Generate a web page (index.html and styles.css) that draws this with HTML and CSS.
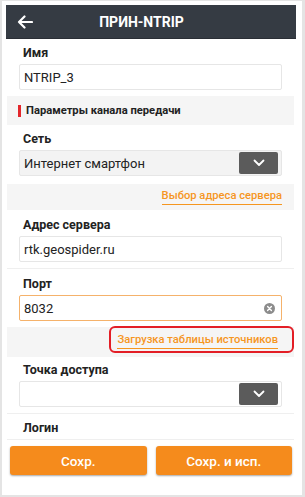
FILE: index.html
```html
<!DOCTYPE html>
<html lang="ru">
<head>
    <meta charset="UTF-8">
    <title>ПРИН-NTRIP</title>
    <meta name="viewport" content="width=device-width, initial-scale=1.0">
    <link rel="stylesheet" href="styles.css">
</head>
<body>
    <div class="frame">
        <div class="screen">
            <header class="topbar">
                <svg class="back" width="16" height="14" viewBox="0 0 16 14">
                    <path d="M15 7H2M7.5 1.5L2 7l5.5 5.5" fill="none" stroke="#fff" stroke-width="2.2" stroke-linecap="round" stroke-linejoin="round"/>
                </svg>
                <h1>ПРИН-NTRIP</h1>
            </header>

            <div class="field first">
                <label>Имя</label>
                <div class="input">NTRIP_3</div>
            </div>

            <div class="section">Параметры канала передачи</div>

            <div class="field tight">
                <label>Сеть</label>
                <div class="input select grey">
                    <span>Интернет смартфон</span>
                    <span class="drop">
                        <svg width="12" height="8" viewBox="0 0 12 8"><path d="M1.5 1.5L6 6l4.5-4.5" fill="none" stroke="#fff" stroke-width="1.8" stroke-linecap="round" stroke-linejoin="round"/></svg>
                    </span>
                </div>
            </div>

            <div class="band">
                <a class="link">Выбор адреса сервера</a>
            </div>

            <div class="field">
                <label>Адрес сервера</label>
                <div class="input">rtk.geospider.ru</div>
            </div>

            <div class="field sep">
                <label>Порт</label>
                <div class="input active">
                    <span>8032</span>
                    <span class="clear">
                        <svg width="11" height="11" viewBox="0 0 11 11"><circle cx="5.5" cy="5.5" r="5.5" fill="#8c8c8c"/><path d="M3.6 3.6l3.8 3.8M7.4 3.6L3.6 7.4" stroke="#fff" stroke-width="1.4" stroke-linecap="round"/></svg>
                    </span>
                </div>
            </div>

            <div class="band tall">
                <span class="mark"><a class="link">Загрузка таблицы источников</a></span>
            </div>

            <div class="field tighter">
                <label>Точка доступа</label>
                <div class="input select">
                    <span></span>
                    <span class="drop">
                        <svg width="12" height="8" viewBox="0 0 12 8"><path d="M1.5 1.5L6 6l4.5-4.5" fill="none" stroke="#fff" stroke-width="1.8" stroke-linecap="round" stroke-linejoin="round"/></svg>
                    </span>
                </div>
            </div>

            <div class="field sep short">
                <label>Логин</label>
            </div>

            <div class="actions">
                <button>Сохр.</button>
                <button>Сохр. и исп.</button>
            </div>
        </div>
    </div>
</body>
</html>
```

FILE: styles.css
```css
* {
    box-sizing: border-box;
}
body {
    margin: 0;
    background: #fff;
    font-family: Roboto, "Liberation Sans", Arial, sans-serif;
    color: #222;
}
.frame {
    width: 305px;
    height: 497px;
    border: 2px solid #e4e4e4;
    border-top-width: 1px;
    border-right-width: 3px;
    padding: 4px 6px 0 4px;
    overflow: hidden;
}
.screen {
    width: 290px;
    height: 489px;
    overflow: hidden;
}
.topbar {
    height: 34px;
    background: #353b43;
    display: flex;
    align-items: center;
    padding-left: 11px;
    border-bottom: 1px solid #2a2e35;
}
.topbar h1 {
    flex: 1;
    margin: 0;
    padding-right: 46px;
    text-align: center;
    color: #fff;
    font-size: 14px;
    font-weight: 700;
}
.field {
    padding: 7px 14px 0 13px;
}
.field.first {
    padding-top: 6px;
}
.field.tight {
    padding-top: 6px;
}
.field.tighter {
    padding-top: 5px;
}
.field.sep {
    border-top: 1px solid #efefef;
    margin: 6px 2px 0 1px;
    padding: 7px 12px 0 12px;
}
.field label {
    display: block;
    height: 16px;
    line-height: 16px;
    padding-left: 4px;
    font-size: 12.5px;
    font-weight: 700;
    color: #222;
}
.input {
    margin-top: 3px;
    height: 26px;
    border: 1px solid #e6e6e6;
    border-radius: 2px;
    background: #fff;
    display: flex;
    align-items: center;
    justify-content: space-between;
    padding: 0 3px 0 4px;
    font-size: 13px;
    color: #222;
}
.input.grey {
    background: #f3f3f3;
}
.input.active {
    border-color: #f5b26b;
    padding-right: 6px;
}
.drop {
    width: 39px;
    height: 22px;
    border-radius: 2px;
    background: #5b5b5b;
    display: flex;
    align-items: center;
    justify-content: center;
}
.clear {
    display: flex;
}
.section {
    margin: 6px 2px 0 1px;
    height: 29px;
    background: #f5f5f5;
    display: flex;
    align-items: center;
    padding-left: 11px;
    font-size: 11.2px;
    font-weight: 700;
    color: #222;
}
.section::before {
    content: "";
    width: 3px;
    height: 12px;
    background: #e3262b;
    margin-right: 5px;
}
.band {
    margin: 8px 2px 0 1px;
    height: 26px;
    background: #f5f5f5;
    display: flex;
    align-items: center;
    justify-content: flex-end;
    padding-right: 12px;
}
.band.tall {
    margin-top: 6px;
    height: 30px;
    padding-right: 0;
    align-items: flex-start;
}
.link {
    color: #f5961f;
    font-size: 11.2px;
    font-weight: 500;
    border-bottom: 1px solid #f5961f;
    line-height: 14px;
    padding-bottom: 1px;
}
.mark {
    border: 2px solid #e31e26;
    border-radius: 6px;
    height: 27px;
    padding: 2px 14px 0 6px;
    display: flex;
    align-items: center;
    margin-top: -1px;
}
.field.short {
    height: 26px;
    margin-top: 6px;
    padding-top: 6px;
}
.actions {
    border-top: 1px solid #efefef;
    margin: 0 2px 0 1px;
    display: flex;
    gap: 9px;
    padding: 6px 2px 0 3px;
}
.actions button {
    flex: 1;
    height: 29px;
    border: none;
    border-radius: 3px;
    background: #f58b1c;
    color: #fff;
    font-family: Roboto, "Liberation Sans", Arial, sans-serif;
    font-size: 13.5px;
    font-weight: 500;
    box-shadow: 0 1px 2px rgba(0,0,0,0.35);
}
```
